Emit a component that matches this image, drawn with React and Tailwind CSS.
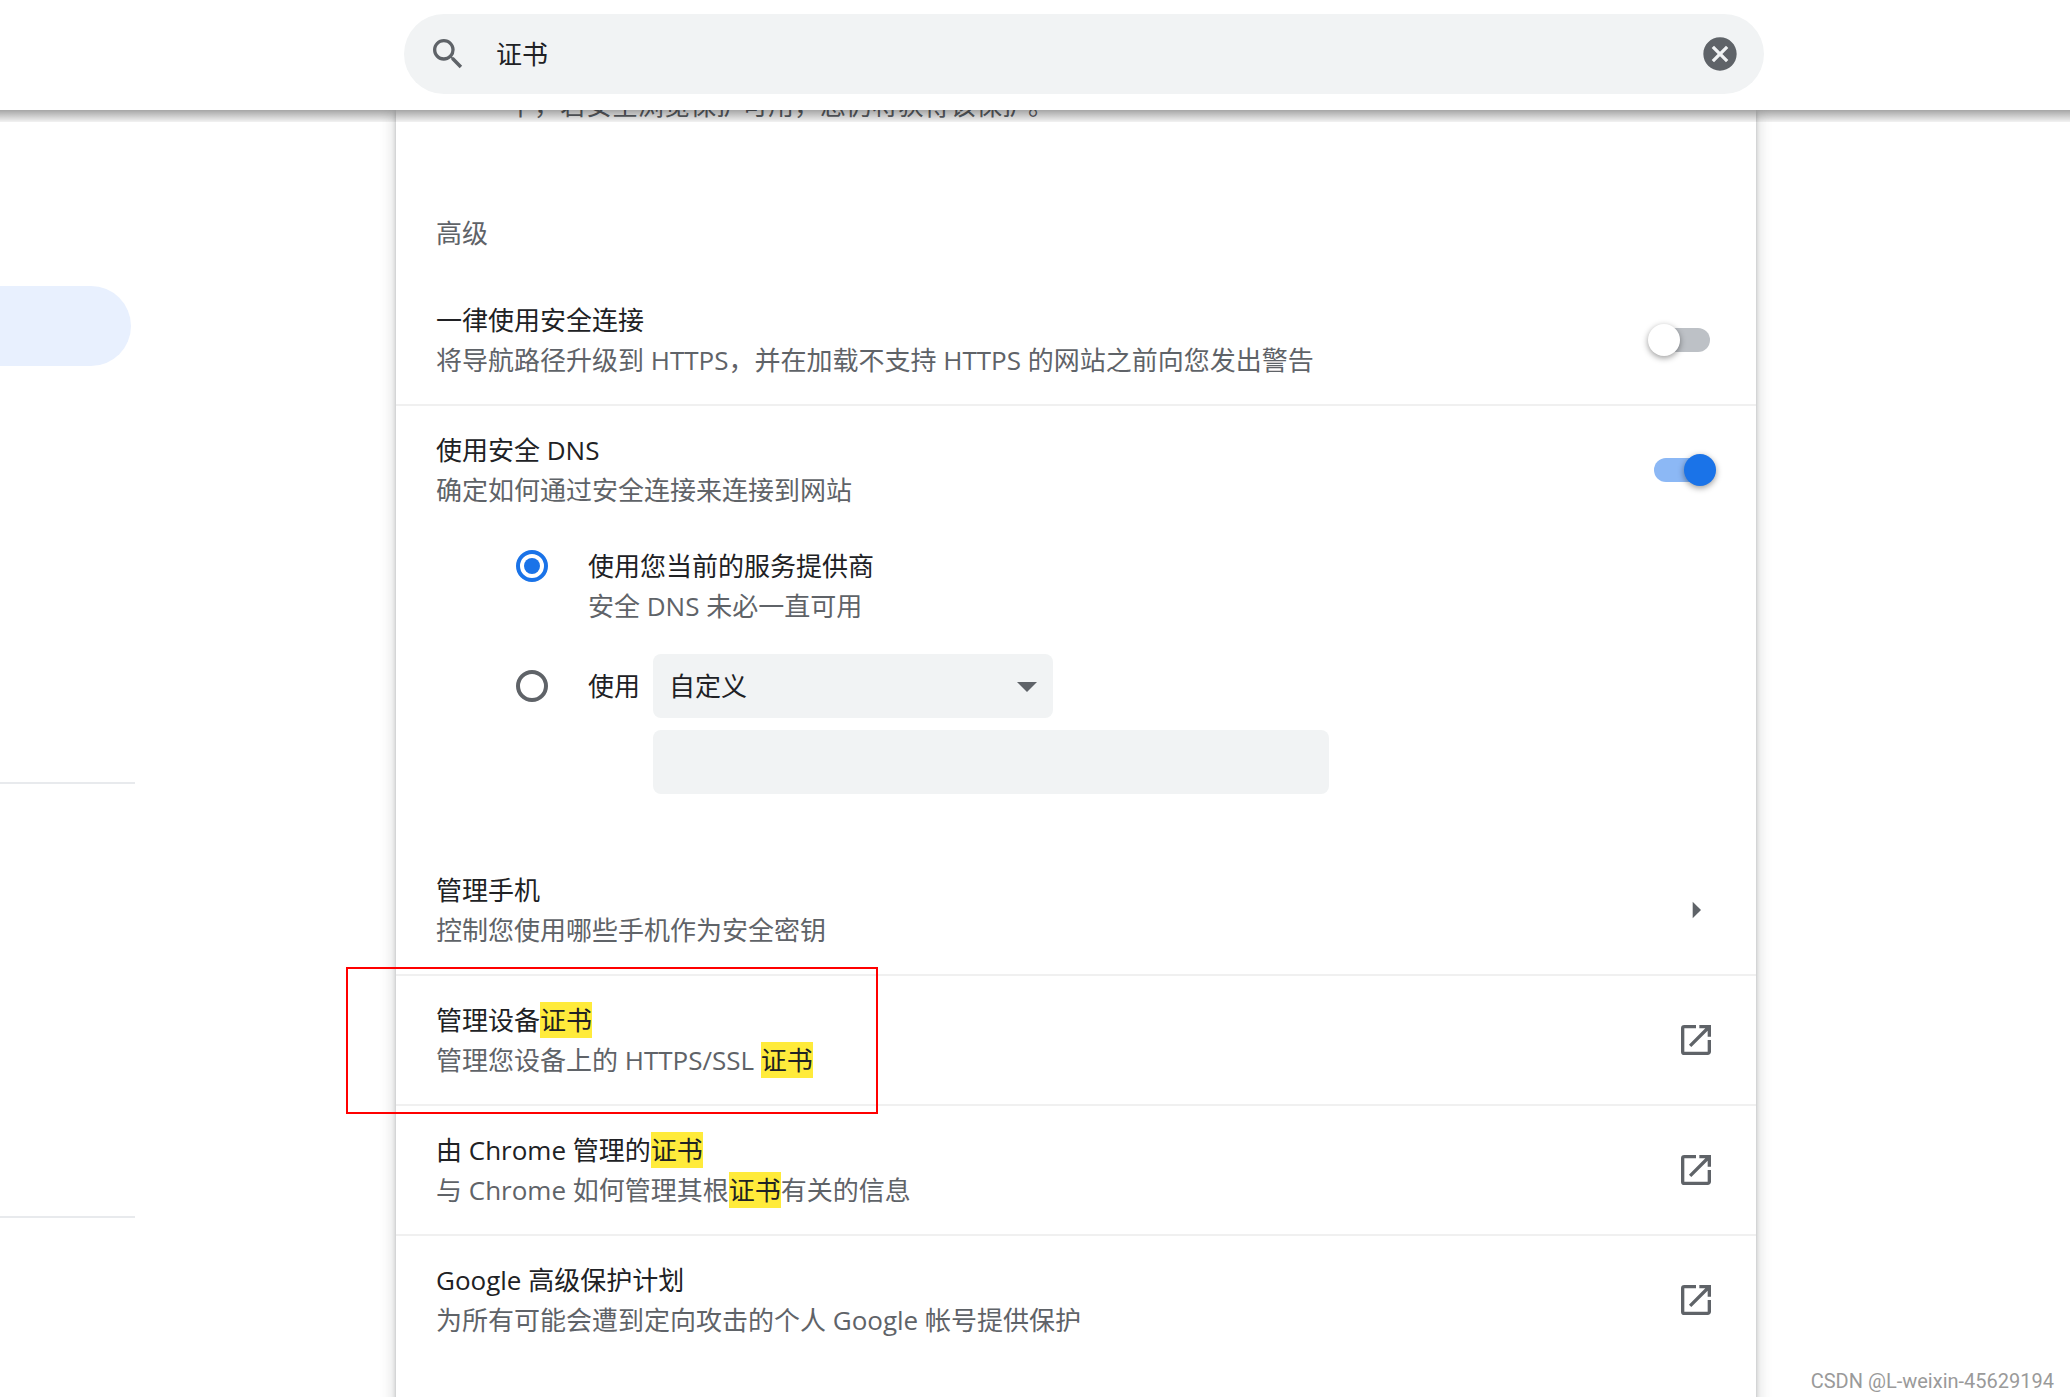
import React, { useState } from "react";
import { MdSearch, MdCancel, MdOpenInNew, MdArrowRight, MdArrowDropDown } from "react-icons/md";

const Mark = ({ children }) => (
  <mark className="bg-[#ffeb3b] text-[#202124]">{children}</mark>
);

const Toggle = ({ id, checked, onChange }) => (
  <input
    id={id}
    type="checkbox"
    role="switch"
    checked={checked}
    onChange={(e) => onChange(e.target.checked)}
    className="relative mr-1.5 h-6 w-14 shrink-0 cursor-pointer appearance-none rounded-full bg-[#bdc1c6] before:absolute before:-top-1 before:-left-1.5 before:size-8 before:rounded-full before:bg-white before:shadow-[0_2px_6px_rgba(0,0,0,0.4)] checked:bg-[#8cb8f5] checked:before:left-[30px] checked:before:bg-[#1a73e8]"
  />
);

const Radio = ({ id, value, selected, onSelect }) => (
  <input
    id={id}
    type="radio"
    name="dns"
    value={value}
    checked={selected === value}
    onChange={() => onSelect(value)}
    className="grid size-8 shrink-0 cursor-pointer appearance-none place-items-center rounded-full border-4 border-[#5f6368] before:hidden before:size-4 before:rounded-full before:bg-[#1a73e8] checked:border-[#1a73e8] checked:before:block"
  />
);

const LinkRow = ({ title, detail, icon, outlined }) => (
  <li className="relative not-first:border-t-2 not-first:border-[#f0f0f0]">
    <a href="#" className="flex items-center justify-between px-10 py-6">
      <span>
        <span className="block">{title}</span>
        <span className="block text-[#5f6368]">{detail}</span>
      </span>
      {icon}
    </a>
    {outlined && (
      <div className="pointer-events-none absolute -top-[9px] -left-[50px] z-10 h-[147px] w-[532px] border-2 border-[#ff0000]" />
    )}
  </li>
);

const openIcon = <MdOpenInNew size={40} className="shrink-0 text-[#5f6368]" />;

const links = [
  {
    title: "管理手机",
    detail: "控制您使用哪些手机作为安全密钥",
    icon: <MdArrowRight size={40} className="shrink-0 text-[#5f6368]" />,
  },
  {
    title: <>管理设备<Mark>证书</Mark></>,
    detail: <>管理您设备上的 HTTPS/SSL <Mark>证书</Mark></>,
    icon: openIcon,
    outlined: true,
  },
  {
    title: <>由 Chrome 管理的<Mark>证书</Mark></>,
    detail: <>与 Chrome 如何管理其根<Mark>证书</Mark>有关的信息</>,
    icon: openIcon,
  },
  {
    title: "Google 高级保护计划",
    detail: "为所有可能会遭到定向攻击的个人 Google 帐号提供保护",
    icon: openIcon,
  },
];

const App = () => {
  const [query, setQuery] = useState("证书");
  const [httpsOnly, setHttpsOnly] = useState(false);
  const [secureDns, setSecureDns] = useState(true);
  const [provider, setProvider] = useState("current");
  const [server, setServer] = useState("");

  return (
    <div className="relative flex min-h-screen flex-col overflow-hidden bg-white font-['Open_Sans','Noto_Sans_CJK_SC',sans-serif] text-[26px] leading-10 text-[#202124]">
      <header className="relative z-10 grid grid-cols-[404px_minmax(0,1360px)_1fr] bg-white pt-3.5 pb-4">
        <div className="col-start-2 flex h-20 items-center rounded-full bg-[#f1f3f4] px-6">
          <MdSearch size={40} className="shrink-0 text-[#5f6368]" />
          <input
            type="text"
            aria-label="在设置中搜索"
            value={query}
            onChange={(e) => setQuery(e.target.value)}
            className="ml-7 min-w-0 flex-1 bg-transparent outline-none"
          />
          <button type="button" aria-label="清除搜索内容" onClick={() => setQuery("")}>
            <MdCancel size={40} className="text-[#5f6368]" />
          </button>
        </div>
        <div className="absolute inset-x-0 top-full h-3 bg-linear-to-b from-black/35 to-black/5" />
      </header>

      <div className="grid flex-1 grid-cols-[396px_minmax(0,1360px)_1fr]">
        <nav className="w-[135px] pt-44">
          <a
            href="#privacy"
            aria-label="隐私设置和安全性"
            className="mr-1 block h-20 rounded-r-full bg-[#e8f0fe]"
          />
          <hr className="mt-[416px] border-t-2 border-[#e8eaed]" />
          <hr className="mt-[432px] border-t-2 border-[#e8eaed]" />
        </nav>

        <main className="-mb-10 bg-white pb-10 shadow-[0_2px_4px_rgba(60,64,67,0.3),0_4px_12px_4px_rgba(60,64,67,0.15)]">
          <p className="-mt-[25px] pr-10 pl-28 text-[#5f6368]">
            下，若安全浏览保护可用，您仍将获得该保护。
          </p>
          <h2 className="mt-[88px] px-10 text-[#5f6368]">高级</h2>

          <div className="mt-[23px] flex items-center justify-between px-10 pt-6 pb-6">
            <label htmlFor="https-only">
              <span className="block">一律使用安全连接</span>
              <span className="block text-[#5f6368]">
                将导航路径升级到 HTTPS，并在加载不支持 HTTPS 的网站之前向您发出警告
              </span>
            </label>
            <Toggle id="https-only" checked={httpsOnly} onChange={setHttpsOnly} />
          </div>

          <div className="flex items-center justify-between border-t-2 border-[#f0f0f0] px-10 py-6">
            <label htmlFor="secure-dns">
              <span className="block">使用安全 DNS</span>
              <span className="block text-[#5f6368]">确定如何通过安全连接来连接到网站</span>
            </label>
            <Toggle id="secure-dns" checked={secureDns} onChange={setSecureDns} />
          </div>

          <div className="mt-3 flex flex-col gap-7 pr-10 pl-[120px]">
            <div className="flex items-start gap-10">
              <div className="pt-1">
                <Radio id="dns-current" value="current" selected={provider} onSelect={setProvider} />
              </div>
              <label htmlFor="dns-current">
                <span className="block">使用您当前的服务提供商</span>
                <span className="block text-[#5f6368]">安全 DNS 未必一直可用</span>
              </label>
            </div>
            <div className="flex items-start gap-10">
              <div className="pt-4">
                <Radio id="dns-custom" value="custom" selected={provider} onSelect={setProvider} />
              </div>
              <div className="flex min-w-0 flex-1 gap-[13px]">
                <label htmlFor="dns-custom" className="shrink-0 pt-3">使用</label>
                <div className="flex min-w-0 flex-1 flex-col gap-3">
                  <div className="relative w-[400px] max-w-full">
                    <select
                      aria-label="DNS 提供商"
                      className="block h-16 w-full appearance-none rounded-lg bg-[#f1f3f4] px-4"
                    >
                      <option>自定义</option>
                    </select>
                    <MdArrowDropDown
                      size={48}
                      className="pointer-events-none absolute top-2 right-0.5 text-[#5f6368]"
                    />
                  </div>
                  <input
                    type="text"
                    aria-label="自定义提供商"
                    value={server}
                    onChange={(e) => setServer(e.target.value)}
                    className="h-16 w-[676px] max-w-full rounded-lg bg-[#f1f3f4] px-4 outline-none"
                  />
                </div>
              </div>
            </div>
          </div>

          <ul className="mt-[52px]">
            {links.map((link, index) => (
              <LinkRow key={index} {...link} />
            ))}
          </ul>
        </main>
      </div>

      <div className="absolute right-4 bottom-0 font-['Roboto',sans-serif] text-[20px] leading-8 text-[#9a9a9a]">
        CSDN @L-weixin-45629194
      </div>
    </div>
  );
};

export default App;
